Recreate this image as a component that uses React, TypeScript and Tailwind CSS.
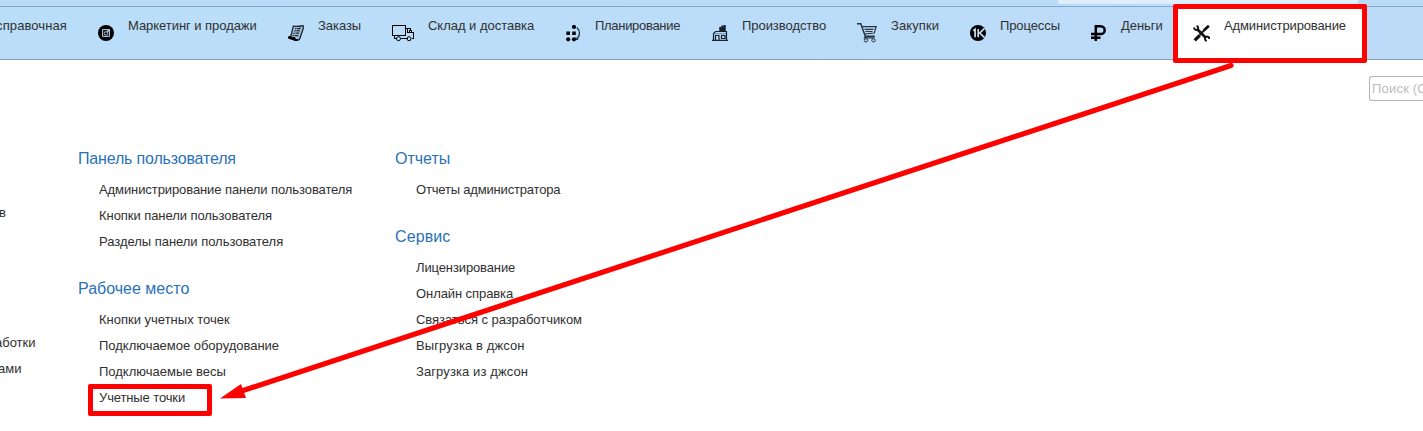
import type { ReactNode } from "react";

const icon = (w: number, h: number, children: ReactNode) => (
  <svg width={w} height={h} viewBox={`0 0 ${w} ${h}`} fill="none" stroke="#000" className="block shrink-0">
    {children}
  </svg>
);

const icons = {
  camera: icon(16, 16, <>
    <circle cx="8" cy="8" r="8" fill="#000" stroke="none" />
    <path d="M4.500 4.500h7v7h-7z" fill="#1c242c" stroke="#a9bccf" strokeWidth="1" />
    <circle cx="8" cy="8.500" r="1.700" fill="#000" stroke="#a9bccf" strokeWidth="1" />
    <path d="m9 7 2.500-2.500" stroke="#c4d6e8" strokeWidth="1.200" />
  </>),
  orders: icon(16, 16, <>
    <path d="M5.300 1.200c3 .5 6 .2 9.700-.7-.2 1.200.6 1.800.4 2.500L12 13c-.4 1.700-1.500 2.500-3 2.300L1 12.300l2-1.500z" fill="#a3c2dc" stroke="#1b242c" strokeWidth="1.300" />
    <path d="m.8 11.600 6.200 1.200c.4 1.400 1.700 2.300 3 2l-1.800 1L.4 13.200z" fill="#000" />
    <path d="m7 3.700 5.700-.3M6.200 6l5.700-.3M5.400 8.300l5.800-.2M4.600 10.500l5.800.1" stroke="#1b242c" strokeWidth="1.200" strokeDasharray="1.500 .7 4" />
  </>),
  truck: icon(22, 17, <>
    <path d="M.5.5h13v10H.5zM2.500 10.500v3h2M8.500 13.500h7M13.500 3.500h5v2h1v2h2v6h-2" shapeRendering="crispEdges" />
    <path d="M15.500 4v3.500h4M17.500 5v1.500" shapeRendering="crispEdges" />
    <circle cx="6.500" cy="13.700" r="2" /><circle cx="17" cy="13.700" r="2" />
  </>),
  planning: icon(15, 17, <>
    <g fill="#000" stroke="none"><circle cx="8" cy="2" r="2.100" /><circle cx="8" cy="14.300" r="2.100" /><circle cx="2.200" cy="14.300" r="2.100" /><path d="M.4 6.500h3.600V10H.4zM6.200 6.500h3.600V10H6.200z" /></g>
    <path d="M10.800 2.500c3.800 3.500 3.500 8.300-.2 11.700" stroke="#26323e" strokeWidth="1.300" />
    <path d="m10 12.200.1 2.400 2.300-.1" strokeWidth=".7" />
  </>),
  factory: icon(16, 16, <>
    <path d="M1.500 15V8.500L3.500 6.500h11V15M0 15.300h16M3.500 15v-4.500H7V15M9.500 10.500H13v3H9.500z" stroke="#15232f" strokeWidth="1.200" />
    <path d="M7.500 6V2H9v.7l.7-.4V.700h1.400v1l.7-.5V0h1.700v6z" fill="#15232f" stroke="#15232f" strokeWidth=".5" />
    <path d="M2 8.700h12" stroke="#4a6479" strokeWidth=".7" />
  </>),
  cart: icon(20, 20, <>
    <path d="M0 .8h3.800l4.500 12.500h9.500" stroke="#26333f" strokeWidth="1.500" />
    <path d="M5.300 3.700h13.800L17.300 10l-9.700 1M7.500 6.300h9M8.500 8.500h7M8.500 13.500l-1 1.300h10" stroke="#26333f" strokeWidth="1.200" />
    <circle cx="9" cy="17.300" r="1.700" stroke="#26333f" /><circle cx="16.500" cy="17.300" r="1.700" stroke="#26333f" />
  </>),
  process: icon(16, 16, <>
    <circle cx="8" cy="8" r="8" fill="#000" stroke="none" />
    <path d="m3.300 5.800 1.800-1.300v7.800M8.200 4v8.300M14.500 3.300 9.800 8l4.700 4.700" stroke="#c4e2f7" strokeWidth="1.700" />
  </>),
  ruble: icon(15, 16, <path d="M4.800 16V1.300h5a3.600 3.600 0 0 1 0 7.800H0M0 12.700h9.500" strokeWidth="2.500" />),
  tools: icon(17, 17, <>
    <path d="m3.800 3.800 9.200 9.200" stroke="#111" strokeWidth="2.700" />
    <path d="M1.200 2.400c-.2 2.200 1.900 3.200 3.300 2.200C5.800 3.500 5.300 1.500 3.500 1" stroke="#111" strokeWidth="1.900" />
    <path d="M16.300 14c.1-2-1.900-3-3.400-2-1.400 1-1.200 3.300.8 4" stroke="#111" strokeWidth="1.900" />
    <path d="m1.700 15.300 5-5" stroke="#111" strokeWidth="3.300" />
    <path d="m6.500 10 7.500-7.500" stroke="#111" strokeWidth="1.900" />
    <path d="m11 5.300 4.900-4.500" stroke="#111" strokeWidth="2.700" />
  </>),
};

const navItems = [
  { label: "Маркетинг и продажи", glyph: icons.camera, box: "w-[190px]", slot: "pl-[18px] pt-[18px]", track: "tracking-[-0.05px]" },
  { label: "Заказы", glyph: icons.orders, box: "w-[110px]", slot: "pl-[18px] pt-[18px]", track: "tracking-[-0.05px]" },
  { label: "Склад и доставка", glyph: icons.truck, box: "w-[167px]", slot: "pl-[12px] pt-[18px]", track: "tracking-[-0.02px]" },
  { label: "Планирование", glyph: icons.planning, box: "w-[147px]", slot: "pl-[19px] pt-[18px]", track: "tracking-[-0.3px]" },
  { label: "Производство", glyph: icons.factory, box: "w-[149px]", slot: "pl-[18px] pt-[18px]", track: "tracking-[-0.05px]" },
  { label: "Закупки", glyph: icons.cart, box: "w-[109px]", slot: "pl-[14px] pt-[16px]", track: "tracking-[0.1px]" },
  { label: "Процессы", glyph: icons.process, box: "w-[121px]", slot: "pl-[18px] pt-[18px]", track: "tracking-[-0.1px]" },
  { label: "Деньги", glyph: icons.ruble, box: "w-[103px]", slot: "pl-[18px] pt-[18px]", track: "tracking-[-0.05px]" },
  { label: "Администрирование", glyph: icons.tools, box: "w-[188px] bg-white", slot: "pl-[17px] pt-[18px]", track: "tracking-[-0.12px]" },
];

type Item = { text: string; track: string };
type Section = { title: string; track: string; items: Item[] };

const userSections: Section[] = [
  {
    title: "Панель пользователя",
    track: "tracking-[-0.17px]",
    items: [
      { text: "Администрирование панели пользователя", track: "tracking-[-0.09px]" },
      { text: "Кнопки панели пользователя", track: "tracking-[-0.06px]" },
      { text: "Разделы панели пользователя", track: "tracking-[-0.03px]" },
    ],
  },
  {
    title: "Рабочее место",
    track: "tracking-normal",
    items: [
      { text: "Кнопки учетных точек", track: "tracking-normal" },
      { text: "Подключаемое оборудование", track: "tracking-[-0.02px]" },
      { text: "Подключаемые весы", track: "tracking-normal" },
      { text: "Учетные точки", track: "tracking-[-0.12px]" },
    ],
  },
];

const serviceSections: Section[] = [
  { title: "Отчеты", track: "tracking-normal", items: [{ text: "Отчеты администратора", track: "tracking-[-0.18px]" }] },
  {
    title: "Сервис",
    track: "tracking-[0.1px]",
    items: [
      { text: "Лицензирование", track: "tracking-[-0.12px]" },
      { text: "Онлайн справка", track: "tracking-[-0.08px]" },
      { text: "Связаться с разработчиком", track: "tracking-[-0.05px]" },
      { text: "Выгрузка в джсон", track: "tracking-[0.1px]" },
      { text: "Загрузка из джсон", track: "tracking-[0.1px]" },
    ],
  },
];

function Sections({ sections }: { sections: Section[] }) {
  return (
    <div className="flex w-[317px] shrink-0 flex-col gap-5">
      {sections.map((s) => (
        <section key={s.title}>
          <h2 className={`h-[32px] pt-px text-[16px] leading-[26px] text-[#2a72b8] ${s.track}`}>{s.title}</h2>
          <ul className="pl-[21px]">
            {s.items.map((t) => (
              <li key={t.text} className={`h-[26px] text-[13px] leading-[26px] ${t.track}`}>{t.text}</li>
            ))}
          </ul>
        </section>
      ))}
    </div>
  );
}

export default function App() {
  return (
    <div className="relative h-[431px] w-[1423px] overflow-hidden bg-white font-['Liberation_Sans',Arial,sans-serif] whitespace-nowrap text-[#303030]">
      <header>
        <div className="flex h-[7px] items-start border-b border-[#87a9ca] bg-[#badcf9] pl-[1058px]">
          <div className="h-1 w-[300px] rounded-b-[2px] bg-[#dfeefc]" />
        </div>
        <nav className="flex h-[53px] border-b border-[#8d9fae] bg-linear-to-r from-[#badef9] to-[#bcdbf8] text-[13px] leading-[15px]">
          <div className="flex w-[80px] shrink-0 justify-end pt-[11px] pr-[13px] tracking-[0.1px]">справочная</div>
          {navItems.map((n) => (
            <a key={n.label} className={`flex shrink-0 ${n.box}`}>
              <span className={`w-12 shrink-0 ${n.slot}`}>{n.glyph}</span>
              <span className={`pt-[11px] ${n.track}`}>{n.label}</span>
            </a>
          ))}
        </nav>
      </header>
      <div className="flex h-[85px] justify-end pt-4">
        <div className="h-[25px] w-[54px] overflow-hidden rounded-l-[3px] border border-r-0 border-[#b5b5b5] pl-0.5 text-[13px] leading-[23px] tracking-[0.2px] text-[#bcbcbc]">Поиск (Ctrl+F)</div>
      </div>
      <main className="flex">
        <div className="flex w-[78px] shrink-0 flex-col pt-[55px] text-[13px] leading-[26px]">
          <span className="-ml-px">в</span>
          <div className="mt-[104px] flex flex-col">
            <span className="-ml-[5px]">аботки</span>
            <span className="-ml-[2px]">ами</span>
          </div>
        </div>
        <Sections sections={userSections} />
        <Sections sections={serviceSections} />
      </main>
      <div className="absolute top-[4px] left-[1173px] h-[59px] w-[194px] rounded-[2px] border-[5px] border-[#f00]" />
      <div className="absolute top-[384px] left-[88px] h-[32px] w-[124px] rounded-[2px] border-[5px] border-[#f00]" />
      <svg className="absolute inset-0" width="1423" height="431" fill="#f00">
        <path d="M1231 65.500 240 391.500" stroke="#f00" strokeWidth="5.2" strokeLinecap="round" />
        <path d="m220 398.500 21-14.500 5 14z" />
      </svg>
    </div>
  );
}
